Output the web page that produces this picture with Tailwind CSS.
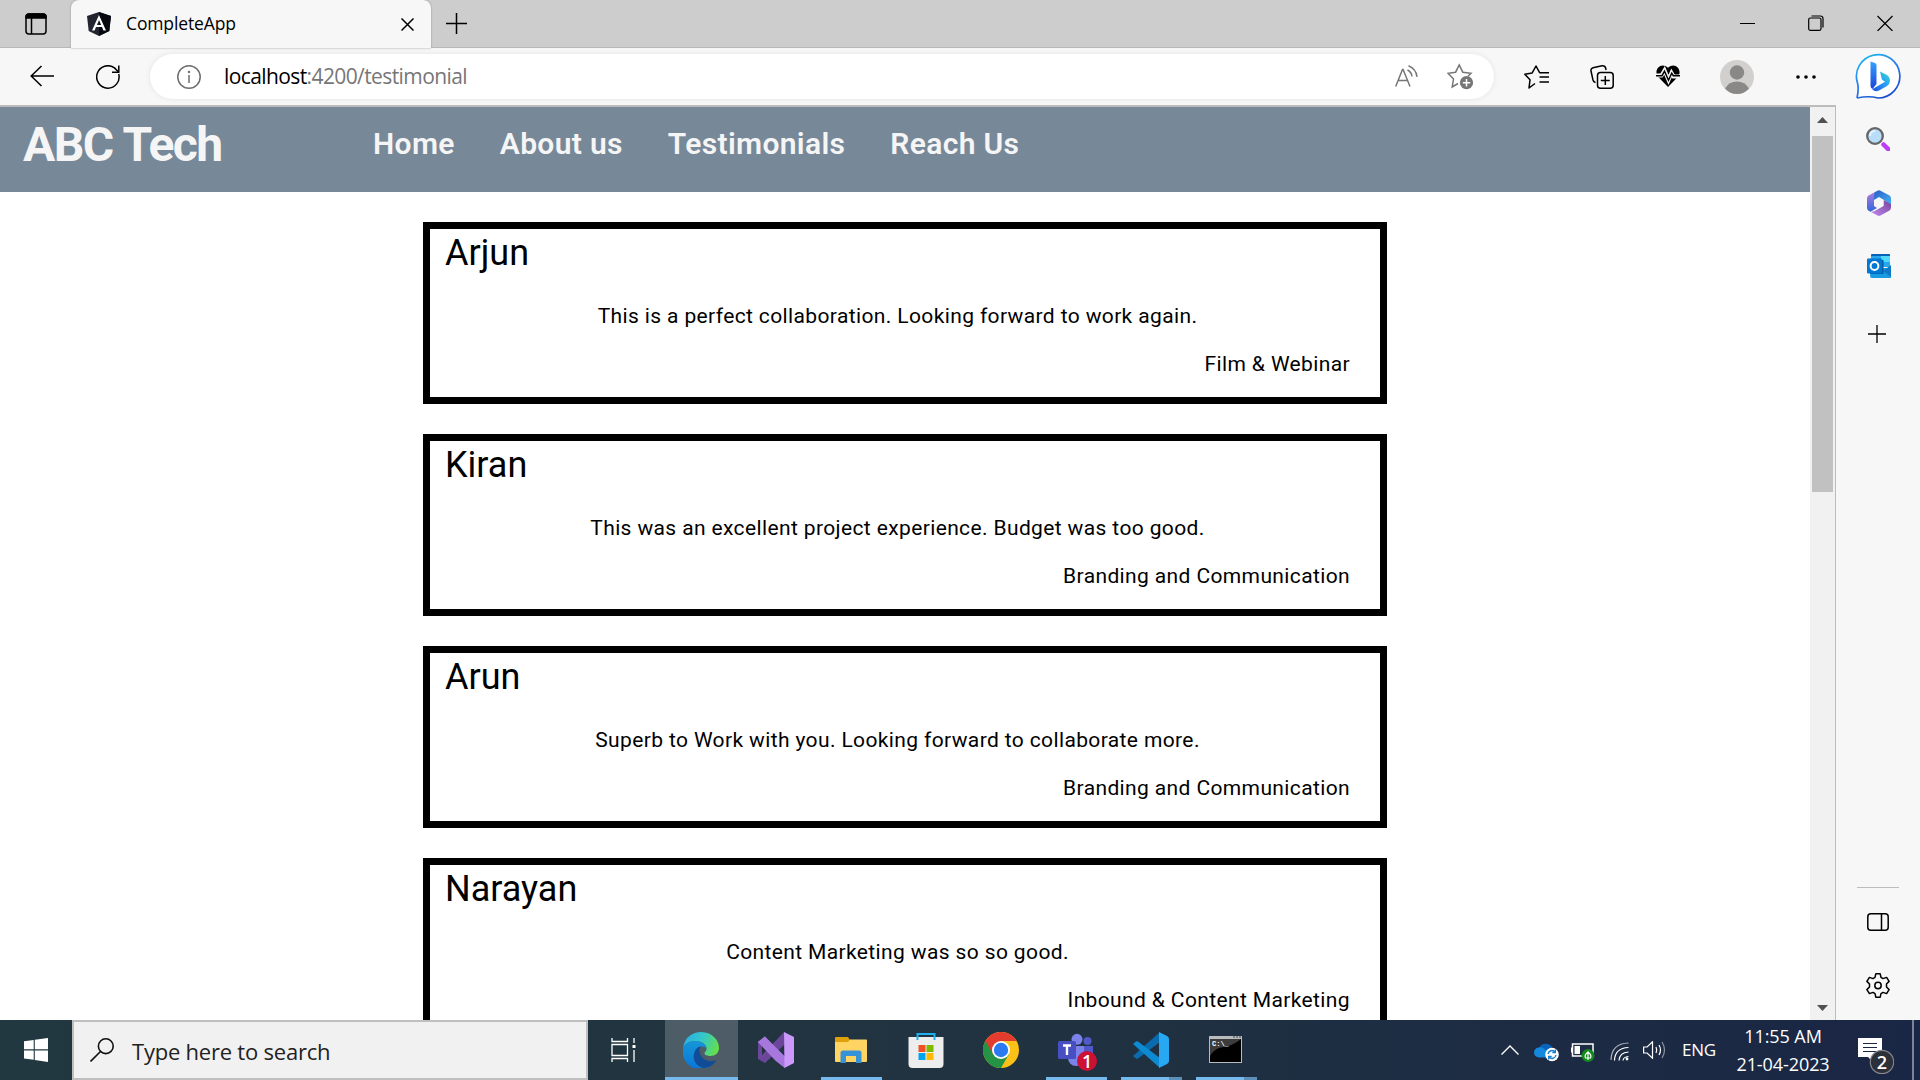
<!DOCTYPE html>
<html lang="en">
<head>
<meta charset="utf-8">
<title>CompleteApp</title>
<script src="https://cdn.jsdelivr.net/npm/@tailwindcss/browser@4"></script>
</head>
<body class="flex h-screen w-screen flex-col overflow-hidden bg-[#f7f7f7] font-['Open_Sans',sans-serif] text-black">

<!-- Tab strip -->
<div class="flex h-12 shrink-0 border-b border-[#b8b8b8] bg-[#cdcdcd]">
  <div class="flex w-[71px] items-center pl-[25px]">
    <svg class="size-[22px]" viewBox="0 0 22 22" fill="none" stroke="#000" stroke-width="1.5"><rect x="1" y="1" width="20" height="20" rx="3"/><path d="M1 5V4a3 3 0 0 1 3-3h14a3 3 0 0 1 3 3v1z" fill="#000"/><path d="M6.5 5v16"/></svg>
  </div>
  <div class="flex h-12 w-[360px] items-center rounded-t-lg bg-[#f7f7f7] pl-[16px] shadow-[0_0_2px_#888]">
    <svg class="h-6 w-[24px]" viewBox="0 0 24 24"><path d="M12 0 24 4l-1.700 15L12 24 1.700 19 0 4z" fill="#22252f"/><path d="M12 0 24 4l-1.700 15L12 24z" fill="#070910"/><path d="M12 3 5 18.500h2.600L9 15h6l1.400 3.500H19zm0 5 2.100 5H9.900z" fill="#fff"/></svg>
    <span class="ml-[15px] text-[17.5px] leading-6 tracking-[-0.13px] pb-[2px]">CompleteApp</span>
    <svg class="mr-[17px] ml-auto mt-[1px] size-[13px]" viewBox="0 0 13 13" stroke="#000" stroke-width="1.5"><path d="M.5.5l12 12M12.500.5l-12 12"/></svg>
  </div>
  <svg class="mt-[13px] ml-[15px] size-[21px]" viewBox="0 0 21 21" stroke="#000" stroke-width="1.500"><path d="M10.500 0v21M0 10.500h21"/></svg>
  <div class="mt-[15px] mr-[27px] ml-auto flex gap-[53px]">
    <svg class="size-4" viewBox="0 0 16 16" stroke="#000"><path d="M1 8.500h15"/></svg>
    <svg class="size-4" viewBox="0 0 16 16" fill="none" stroke="#000" stroke-width="1.200"><rect x=".7" y="3" width="12.300" height="12.300" rx="1.500"/><path d="M3.500 1h9a2.500 2.500 0 0 1 2.500 2.500v9"/></svg>
    <svg class="size-4" viewBox="0 0 16 16" stroke="#000" stroke-width="1.200"><path d="M.5 1l15 15M15.500 1l-15 15"/></svg>
  </div>
</div>

<!-- Toolbar -->
<div class="flex h-[57px] shrink-0 items-center">
  <svg class="ml-[30px] -mt-[2px] h-[22px] w-6" viewBox="0 0 24 22" fill="none" stroke="#000" stroke-width="1.500"><path d="M11.500 1 1.200 11l10.300 10M1 11h23"/></svg>
  <svg class="ml-[42px] size-6" viewBox="0 0 24 24" fill="none" stroke="#000" stroke-width="1.500"><path d="M22.700 9A11.200 11.200 0 1 1 18.500 2.900L22.500 7"/><path d="M22.800.5V7.200H16"/></svg>
  <div class="ml-[30px] flex h-[45px] w-[1344px] items-center rounded-full bg-white shadow-[0_0_5px_#e2e2e2]">
    <svg class="ml-[27px] size-6" viewBox="0 0 24 24" fill="none" stroke="#6e6e6e" stroke-width="1.500"><circle cx="12" cy="12" r="11.200"/><path d="M12 10v8"/><circle cx="12" cy="7" r=".5"/></svg>
    <span class="ml-[23px] pb-[1px] text-[21px] leading-[30px] tracking-[-0.6px]">localhost<span class="text-[#767676]">:4200/testimonial</span></span>
    <svg class="-mt-[2px] ml-auto h-[22px] w-[23px]" viewBox="0 0 23 22" fill="none" stroke="#767676" stroke-width="1.500"><path d="M.7 21.500 7.500 4.500h.6L15 21.500M3 15.500h9.500M12.500 5q4 2 4.500 6.500M13.500.8q7.500 3 8.500 11"/></svg>
    <svg class="mr-[20px] ml-[29px] size-[27px]" viewBox="0 0 27 27" fill="none" stroke="#767676" stroke-width="1.500"><path d="M11 20.500 5.200 24l1.300-8L1 10.300l7.600-1.100L12.200 2l3.600 7.200 8.200 1.100-3 3"/><circle cx="19.500" cy="19.700" r="6.600" fill="#767676" stroke="none"/><path d="M19.500 16v7.400M15.800 19.700h7.400" stroke="#fff"/></svg>
  </div>
  <svg class="ml-[30px] h-6 w-[25px]" viewBox="0 0 25 24" fill="none" stroke="#000" stroke-width="1.500" stroke-linejoin="round"><path d="M11 18.500 5 23l1-8.200L.8 9.200l7.400-1.300L12 1l3.600 6.600 1.600.4M15.500 12H25M15.500 7.700H25M15.500 17H25" /></svg>
  <svg class="ml-[41px] size-6" viewBox="0 0 24 24" fill="none" stroke="#000" stroke-width="1.500"><rect x="7.500" y="7.500" width="15.700" height="15.700" rx="3"/><path d="M15.300 11v9M10.800 15.400h9M5.500 17.500q-2-.5-2.500-2.500L1 6Q.500 3.500 3 2.800L12 .8q3-.3 3.600 2.200l.5 2"/></svg>
  <svg class="ml-[42px] -mt-[2px] size-6" viewBox="0 0 24 24"><path d="M12 23 2 12.800C-3 6 5-3 12 3.800 19-3 27 6 22 12.800z" fill="#000"/><path d="M-1 11.500h6.500l3-5 4 9.500 3-7 2 3.500H25" fill="none" stroke="#f7f7f7" stroke-width="4"/><path d="M0 11.700h6l2.500-4.500 4 9 3.200-7 1.600 2.500H24" fill="none" stroke="#000" stroke-width="1.500"/></svg>
  <svg class="ml-[40px] size-[34px]" viewBox="0 0 34 34"><circle cx="17" cy="17" r="17" fill="#d2d0ce"/><circle cx="17" cy="12.500" r="7.200" fill="#8a8886"/><path d="M5 28.500q4-7 12-7t12 7Q24 34 17 34T5 28.500" fill="#8a8886"/></svg>
  <svg class="ml-[41px] h-1 w-[22px]" viewBox="0 0 22 4"><circle cx="3" cy="2" r="1.800"/><circle cx="11" cy="2" r="1.800"/><circle cx="19" cy="2" r="1.800"/></svg>
  <svg class="-mt-[2px] ml-[38px] size-[46px]" viewBox="0 0 46 46"><defs><linearGradient id="bubble" x1="0" y1="0" x2=".6" y2="1"><stop stop-color="#18c5f0"/><stop offset=".5" stop-color="#2a80f0"/><stop offset="1" stop-color="#1b50d0"/></linearGradient><linearGradient id="stem" x1="0" y1="0" x2="0" y2="1"><stop stop-color="#37a0ff"/><stop offset="1" stop-color="#1745d8"/></linearGradient><linearGradient id="bowl" x1="1" y1="0" x2="0" y2="1"><stop stop-color="#35e0d0"/><stop offset=".5" stop-color="#2898f5"/><stop offset="1" stop-color="#2050dd"/></linearGradient></defs><path d="M2 45Q4 36 2.500 30A21.700 21.700 0 1 1 23 45Q14 42.500 2 45" fill="#fff" stroke="url(#bubble)" stroke-width="1.700"/><path d="M15.500 8.500 20 10q1.500.5 1.500 2.500V31l-4 5q-2-1-2-3z" fill="url(#stem)"/><path d="M25 18.500 32 22q3 2 3 6 0 3-3 5l-8 4.500q-4 2-6.800-1.200L30 28.800l-3-2z" fill="url(#bowl)"/></svg>
</div>

<!-- Page and sidebar -->
<div class="flex min-h-0 flex-1">
  <div class="flex w-[1836px] shrink-0 border-t-2 border-r border-[#bcbcbc] bg-white">
    <main class="flex w-[1810px] flex-col overflow-hidden font-[Roboto,sans-serif]">
      <header class="flex h-[85px] shrink-0 bg-[#778899] pl-[23px] text-[whitesmoke]">
        <h1 class="mt-[10px] w-[350px] text-[48px] leading-[56px] font-bold tracking-[-1.6px] [word-spacing:1px]">ABC Tech</h1>
        <nav class="mt-[17px] flex gap-[45px] text-[30px] leading-10 font-semibold tracking-[0.34px]">
          <a>Home</a><a>About us</a><a>Testimonials</a><a>Reach Us</a>
        </nav>
      </header>
      <section class="flex flex-col items-center gap-[30px] pt-[30px] text-[21px] leading-[30px] tracking-[0.375px]">
        <article class="w-[964px] border-[7px] border-black pr-[30px] pb-[18px] pl-[15px]">
          <h2 class="text-[36px] leading-[48px] tracking-normal">Arjun</h2>
          <p class="mt-6 text-center">This is a perfect collaboration. Looking forward to work again.</p>
          <p class="mt-[18px] text-right">Film &amp; Webinar</p>
        </article>
        <article class="w-[964px] border-[7px] border-black pr-[30px] pb-[18px] pl-[15px]">
          <h2 class="text-[36px] leading-[48px] tracking-normal">Kiran</h2>
          <p class="mt-6 text-center">This was an excellent project experience. Budget was too good.</p>
          <p class="mt-[18px] text-right">Branding and Communication</p>
        </article>
        <article class="w-[964px] border-[7px] border-black pr-[30px] pb-[18px] pl-[15px]">
          <h2 class="text-[36px] leading-[48px] tracking-normal">Arun</h2>
          <p class="mt-6 text-center">Superb to Work with you. Looking forward to collaborate more.</p>
          <p class="mt-[18px] text-right">Branding and Communication</p>
        </article>
        <article class="w-[964px] border-[7px] border-black pr-[30px] pb-[18px] pl-[15px]">
          <h2 class="text-[36px] leading-[48px] tracking-normal">Narayan</h2>
          <p class="mt-6 text-center">Content Marketing was so so good.</p>
          <p class="mt-[18px] text-right">Inbound &amp; Content Marketing</p>
        </article>
      </section>
    </main>
    <div class="flex w-[25px] flex-col items-center bg-[#f1f1f1]">
      <svg class="mt-[10px] h-[6px] w-[11px]" viewBox="0 0 11 6"><path d="M0 6 5.500 0 11 6z" fill="#505050"/></svg>
      <div class="mt-[13px] h-[356px] w-[21px] bg-[#c1c1c1]"></div>
      <svg class="mt-auto mb-[9px] h-[6px] w-[11px]" viewBox="0 0 11 6"><path d="M0 0 5.500 6 11 0z" fill="#505050"/></svg>
    </div>
  </div>
  <aside class="flex flex-1 flex-col items-center">
    <svg class="mt-[22px] size-6" viewBox="0 0 24 24"><path d="m17.500 17.500 5 5" stroke="#bb3df5" stroke-width="4.500" stroke-linecap="round"/><circle cx="9" cy="9" r="7.800" fill="#b9defa" stroke="#666" stroke-width="2.300"/><path d="M4 9a5 5 0 0 1 5-5" stroke="#e3f3ff" stroke-width="2" fill="none"/></svg>
    <svg class="mt-[39px] ml-[2px] h-[26px] w-6" viewBox="0 0 24 26"><defs><linearGradient id="ma" x1="0" y1="0" x2="0" y2="1"><stop stop-color="#b07be0"/><stop offset="1" stop-color="#3267d8"/></linearGradient><linearGradient id="mb" x1="0" y1="0" x2="1" y2="1"><stop stop-color="#2a5cc8"/><stop offset="1" stop-color="#42b6f2"/></linearGradient><linearGradient id="mc" x1="0" y1="1" x2="1" y2="0"><stop stop-color="#c48af0"/><stop offset="1" stop-color="#73439c"/></linearGradient></defs><path d="M8 2 1.500 5.500Q0 6.500 0 8.500V18q0 2 2 3l1.500.700L10 18l-3-2V8z" fill="url(#ma)"/><path d="M8 2 11 .5q1-.6 2 0L22.500 5.500Q24 6.500 24 8.500V15l-7-5-5-3-5 3V6q0-3 1-4" fill="url(#mb)"/><path d="M24 14v3.500q0 2-1.500 3L13.500 25.500q-1.500.8-3 0L3.500 21.700q3.500.5 6-1.700l7-4V10z" fill="url(#mc)"/><path d="m12 8 4.500 2.500v5L12 18l-4.500-2.500v-5z" fill="#f7f7f7"/></svg>
    <svg class="mt-[38px] ml-[2px] size-6" viewBox="0 0 24 24"><path d="M5 0h17a1 1 0 0 1 1 1v12H4V1a1 1 0 0 1 1-1" fill="#28a8ea"/><path d="M5 0h17a1 1 0 0 1 1 1v1H4V1z" fill="#0764b5"/><path d="M14 2h9v6h-9z" fill="#50d9ff"/><path d="M4 14h20v9a1 1 0 0 1-1 1H5a2 2 0 0 1-2-2z" fill="#199be2"/><path d="m16 17 8-6v12z" fill="#0f79c8"/><rect x="3" y="6" width="13.500" height="14" fill="#075ba3"/><rect y="4.500" width="15" height="15" rx="1" fill="#0078d4"/><circle cx="7.500" cy="12" r="3.900" fill="none" stroke="#fff" stroke-width="2"/></svg>
    <svg class="mt-[47px] mr-[2px] size-[18px]" viewBox="0 0 18 18" stroke="#000" stroke-width="1.300"><path d="M9 0v18M0 9h18"/></svg>
    <div class="mt-auto h-px w-[42px] bg-[#bcbcbc]"></div>
    <svg class="mt-[25px] h-[18px] w-[22px]" viewBox="0 0 22 18" fill="none" stroke="#000" stroke-width="1.500"><rect x=".8" y=".8" width="20.400" height="16.400" rx="3"/><path d="M14.500 1v16"/></svg>
    <svg class="mt-[42px] mb-[22px] h-[25px] w-6" viewBox="0 0 24 25" fill="none" stroke="#000" stroke-width="1.500" stroke-linejoin="round"><circle cx="12" cy="12.500" r="3.200"/><path d="M9.800.8h4.400l.8 3.600 2 1.200 3.600-1.200 2.500 4-2.600 2.600v3l2.600 2.600-2.500 4L17 19.400l-2 1.200-.8 3.600H9.800L9 20.600l-2-1.200-3.600 1.200-2.500-4L3.500 14v-3L.9 8.400l2.500-4L7 5.600l2-1.200z"/></svg>
  </aside>
</div>

<!-- Taskbar -->
<div class="flex h-[60px] shrink-0 bg-linear-to-r from-[#213840] via-[#213340] to-[#1a2645] text-white">
  <div class="flex w-[72px] items-center justify-center">
    <svg class="size-6" viewBox="0 0 24 24" fill="#fff"><path d="M0 3.300 9.700 2v9.300H0zM10.800 1.800 24 0v11.300H10.800zM0 12.500h9.700v9.300L0 20.500zM10.800 12.500H24V24l-13.200-1.900z"/></svg>
  </div>
  <div class="flex w-[516px] items-center border-2 border-[#bfbfbf] bg-[#f1f1f1] pl-[16px] text-[#222]">
    <svg class="size-6" viewBox="0 0 24 24" fill="none" stroke="#111" stroke-width="1.600"><circle cx="15.800" cy="8.200" r="7.400"/><path d="M10.500 13.500.5 23.500"/></svg>
    <span class="ml-[18px] pt-[1px] text-[22px] leading-7 tracking-[-0.22px]">Type here to search</span>
  </div>
  <div class="flex w-[75px] items-start pt-[18px] pl-[23px]">
    <svg class="h-6 w-[26px]" viewBox="0 0 26 24" fill="none" stroke="#fff" stroke-width="1.300"><path d="M1 0v3.500h15.500V0M1 24v-3.500h15.500V24M1 6.500h15.500v11H1zM23 0v5M23 12v12"/><path d="M21.500 7h3v3h-3z" fill="#fff" stroke="none"/></svg>
  </div>
  <!-- Pinned and running apps -->
  <div class="relative flex w-[75px] justify-center pt-3">
    <div class="absolute inset-y-0 right-0 left-[2px] border-b-[3px] border-[#76b9ed] bg-white/20"></div>
    <svg class="relative size-9" viewBox="0 0 36 36"><defs><linearGradient id="ea" x1="0" y1=".3" x2="1" y2=".6"><stop stop-color="#28afe8"/><stop offset=".5" stop-color="#35c8c8"/><stop offset="1" stop-color="#66df48"/></linearGradient><linearGradient id="eb" x1="0" y1="0" x2="0" y2="1"><stop stop-color="#1696d8"/><stop offset="1" stop-color="#0a76d8"/></linearGradient></defs><path d="M0 17C1 5 10 0 18 0c12 0 18 9 18 16 0 5-4 8-8.500 8-3 0-6-1-6-2.500s2-2 2-5C23.500 12 18 9 12 9 6 9 1 12 0 17" fill="url(#ea)"/><path d="M0 17c1-5 6-8 12-8 7 0 11.500 4 11.500 7.500C22 14 16 13 14 18c-2 8 4 14 12 17.500A18 18 0 0 1 0 17" fill="url(#eb)"/><path d="M15.500 15C8 20 9 33 20 35.900c6 .3 11-3.400 13.500-7.900-3 1.500-9 2-13-1.500S15 18 18 14.500q-1 0-2.500.5" fill="#114c96"/></svg>
  </div>
  <div class="flex w-[75px] justify-center pt-3">
    <svg class="size-9" viewBox="0 0 36 36"><path d="M0 10 7 5.500 11.500 10 4 14v9L26 0v13L7 31l-7-4z" fill="#6b4699"/><path d="m0 10 7-5.500L27 36l-9-7z" fill="#a073d8"/><path d="m0 10 7-5.500 20 20V36L18 29z" fill="#a678de"/><path d="M26 0 36 5v26l-9.500 5z" fill="#cc99fa"/></svg>
  </div>
  <div class="relative flex w-[75px] justify-center pt-[17px]">
    <svg class="h-[26px] w-8" viewBox="0 0 32 26"><path d="M0 1q0-1 1-1h12l2 3v4H0z" fill="#e0a00c"/><path d="M0 5h13l2-2.500h16q1 0 1 1V24q0 1-1 1H1q-1 0-1-1z" fill="#ffd463"/><path d="M5.500 26V16q0-2.500 2.500-2.500h16q2.500 0 2.500 2.500v10H21v-7H11v7z" fill="#3793d8"/></svg>
    <div class="absolute bottom-0 left-[8px] h-[3px] w-[61px] bg-[#76b9ed]"></div>
  </div>
  <div class="flex w-[75px] justify-center pt-[13px]">
    <svg class="h-[35px] w-9" viewBox="0 0 36 35"><path d="M.5 4h35v27q0 4-4 4h-27q-4 0-4-4z" fill="#ededed"/><path d="M9.500 7V1h17v6" fill="none" stroke="#1cb0f0" stroke-width="2"/><path d="M10.500 12h7v7h-7z" fill="#f25022"/><path d="M18.500 12h7v7h-7z" fill="#7fba00"/><path d="M10.500 20h7v7h-7z" fill="#00a4ef"/><path d="M18.500 20h7v7h-7z" fill="#ffb900"/></svg>
  </div>
  <div class="flex w-[75px] justify-center pt-3">
    <svg class="size-9" viewBox="0 0 36 36"><circle cx="18" cy="18" r="18" fill="#fbc116"/><path d="M18 18 2.400 9A18 18 0 0 0 18 36l8-14z" fill="#259345"/><path d="M2.400 9A18 18 0 0 1 33.600 9H18L10 22z" fill="#e33b2e"/><circle cx="18" cy="18" r="9" fill="#fff"/><circle cx="18" cy="18" r="7.200" fill="#2b7bf0"/></svg>
  </div>
  <div class="relative flex w-[75px] pt-[13px] pl-[20px]">
    <svg class="h-[38px] w-10" viewBox="0 0 40 38"><circle cx="29.500" cy="8" r="4" fill="#5059c9"/><path d="M25 13h10v10a6 6 0 0 1-10 5z" fill="#5059c9"/><circle cx="19" cy="6.300" r="5.500" fill="#7b83eb"/><path d="M10 13h16v12a8 8 0 0 1-16 0z" fill="#7b83eb"/><rect y="8" width="18" height="18" rx="1.500" fill="#474fc2"/><path d="M5 12.500h8M9 12.500V22" stroke="#fff" stroke-width="2.400"/><circle cx="29" cy="28" r="10" fill="#cc1133"/></svg>
    <span class="absolute top-[29px] left-[44px] w-[10px] text-center text-[18px] leading-6 font-semibold">1</span>
    <div class="absolute bottom-0 left-[8px] h-[3px] w-[61px] bg-[#76b9ed]"></div>
  </div>
  <div class="relative flex w-[75px] justify-center pt-3">
    <svg class="size-9" viewBox="0 0 36 36"><path d="M0 24 27 0v10L5 26.500q-1 .7-2 0L0 24" fill="#0a6cae"/><path d="M0 12 3 9.500q1-.7 2 0L27 26v10z" fill="#0c8ad2"/><path d="m26 0 8 4q2 1 2 3v22q0 2-2 3l-8 4z" fill="#28a8f2"/></svg>
    <div class="absolute bottom-0 left-[8px] h-[3px] w-[61px] border-r-[13px] border-[#5c90bb] bg-[#76b9ed]"></div>
  </div>
  <div class="relative flex w-[75px] justify-center pt-4">
    <svg class="h-[27px] w-[33px]" viewBox="0 0 33 27"><path d="M0 0h33v27H0z" fill="#b9bcbe"/><path d="M1 3h31v23H1z" fill="#000"/><path d="M1 3h31q-8 7-20 8.500Q5 13 1 20z" fill="#3c3c3c"/><path d="M24 1h2M27 1h2M30 1h2" stroke="#444"/></svg>
    <span class="absolute top-[20px] left-[24px] font-['Liberation_Mono',monospace] text-[7px] leading-[8px] font-bold">C:\_</span>
    <div class="absolute bottom-0 left-[8px] h-[3px] w-[61px] border-r-[13px] border-[#5c90bb] bg-[#76b9ed]"></div>
  </div>
  <!-- System tray -->
  <div class="ml-auto flex items-center">
    <svg class="h-[10px] w-[18px]" viewBox="0 0 18 10" fill="none" stroke="#fff" stroke-width="1.400"><path d="m.5 9.500 8.500-8.500 8.500 8.500"/></svg>
    <svg class="ml-[15px] mt-[3px] h-5 w-[25px]" viewBox="0 0 25 20"><path d="M5 6a7.500 7.500 0 0 1 14 1l-8 6z" fill="#0a63b8"/><path d="M5 15.500a5 5 0 0 1 0-10q4-.8 7 3l8 7z" fill="#1488dc"/><path d="M13 9q5-4 9 0l2 4-10 2z" fill="#1e90e4"/><circle cx="18" cy="12.500" r="6.800" fill="#fff"/><path d="M14 12a4 4 0 0 1 7-2M22 13a4 4 0 0 1-7 2M21.300 7.500v3h-3M14.700 17.500v-3h3" fill="none" stroke="#1580d0" stroke-width="1.400"/></svg>
    <svg class="ml-[12px] mt-[4px] h-[19px] w-[24px]" viewBox="0 0 24 19"><path d="M1.500 1H22v12H1.500zM0 4.500v5" fill="none" stroke="#fff" stroke-width="1.500"/><path d="M3.500 3H9v8H3.500z" fill="#fff"/><circle cx="17" cy="12.500" r="6.500" fill="#13891c"/><path d="M17 17V9q-4 3-2.500 6h5Q21 12 17 9" fill="none" stroke="#fff" stroke-width="1.200"/></svg>
    <svg class="ml-[15px] mt-[3px] size-[19px]" viewBox="0 0 19 19" fill="none" stroke="#fff" stroke-width="1.200"><path d="M1 18Q1.500 1.500 18.500 1" opacity=".65"/><path d="M4.500 18.500Q5 6 18.500 5.500M9 18.500q.5-8 9.500-8.500M13 18.500q.3-3.500 5.500-4"/><circle cx="17" cy="17" r="1.400" fill="#fff" stroke="none"/></svg>
    <svg class="ml-[14px] h-[18px] w-[23px]" viewBox="0 0 23 18" fill="none" stroke="#fff" stroke-width="1.200"><path d="M.6 6h3.500L9.500.8v16.400L4.100 12H.6z"/><path d="M13 6q1.500 3 0 6M16 4q3 5 0 10"/><path d="M19 1q5 8 0 16" opacity=".5"/></svg>
    <span class="ml-[16px] w-[34px] text-[17px] leading-6 tracking-[-0.3px]">ENG</span>
    <div class="ml-[19px] flex w-[96px] flex-col items-center text-[18px] leading-7 tracking-[-0.08px] whitespace-nowrap">
      <span>11:55 AM</span><span>21-04-2023</span>
    </div>
    <div class="relative ml-[27px] h-[60px] w-[54px]">
      <svg class="mt-[18px] h-9 w-9" viewBox="0 0 36 36"><path d="M0 0h24v19H15v5l-5-5H0z" fill="#fff"/><path d="M5 5.500h14M5 9.500h14M5 13.500h14" stroke="#1a2744" stroke-width="1.200"/><circle cx="24" cy="24" r="11.700" fill="#2c3038" stroke="#85888e" stroke-width="1.200"/></svg>
      <span class="absolute top-[30px] left-[18px] w-3 text-center text-[18px] leading-6 font-semibold">2</span>
    </div>
    <div class="mr-[6px] h-[60px] w-[2px] bg-[#7c8394]"></div>
  </div>
</div>
</body>
</html>
